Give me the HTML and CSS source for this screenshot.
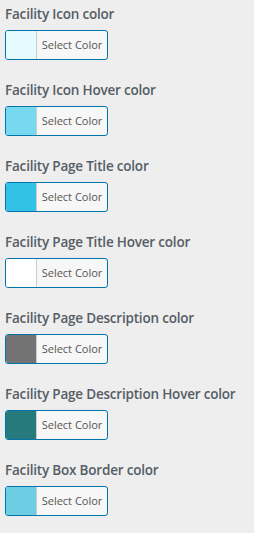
FILE: index.html
```html
<!DOCTYPE html>
<html lang="en">
<head>
    <meta charset="UTF-8">
    <meta name="viewport" content="width=device-width, initial-scale=1.0">
    <title>Facility Colors</title>
    <link rel="stylesheet" href="styles.css">
</head>
<body>
    <div class="control">
        <span class="control-title">Facility Icon color</span>
        <button class="color-result"><span class="swatch swatch-icon"></span><span class="color-text">Select Color</span></button>
    </div>
    <div class="control">
        <span class="control-title">Facility Icon Hover color</span>
        <button class="color-result"><span class="swatch swatch-icon-hover"></span><span class="color-text">Select Color</span></button>
    </div>
    <div class="control">
        <span class="control-title">Facility Page Title color</span>
        <button class="color-result"><span class="swatch swatch-title"></span><span class="color-text">Select Color</span></button>
    </div>
    <div class="control">
        <span class="control-title">Facility Page Title Hover color</span>
        <button class="color-result"><span class="swatch swatch-title-hover"></span><span class="color-text">Select Color</span></button>
    </div>
    <div class="control">
        <span class="control-title">Facility Page Description color</span>
        <button class="color-result"><span class="swatch swatch-desc"></span><span class="color-text">Select Color</span></button>
    </div>
    <div class="control">
        <span class="control-title">Facility Page Description Hover color</span>
        <button class="color-result"><span class="swatch swatch-desc-hover"></span><span class="color-text">Select Color</span></button>
    </div>
    <div class="control">
        <span class="control-title">Facility Box Border color</span>
        <button class="color-result"><span class="swatch swatch-border"></span><span class="color-text">Select Color</span></button>
    </div>
</body>
</html>
```

FILE: styles.css
```css
body {
    margin: 0;
    padding: 0 5px;
    background-color: #eeeeee;
    font-family: 'Open Sans', 'Noto Sans', sans-serif;
}
.control {
    padding-top: 4px;
    margin-bottom: 16px;
}
.control-title {
    display: block;
    font-size: 13.5px;
    font-weight: 600;
    letter-spacing: -0.2px;
    line-height: 20px;
    color: #555d66;
    white-space: nowrap;
    margin-bottom: 6px;
}
.color-result {
    display: flex;
    width: 103px;
    height: 30px;
    padding: 0;
    margin: 0;
    border: 1px solid #0073aa;
    border-radius: 3px;
    background-color: #f7f7f7;
    overflow: hidden;
    box-sizing: border-box;
    cursor: pointer;
    font-family: inherit;
}
.swatch {
    width: 30px;
    height: 100%;
    border-right: 1px solid #cccccc;
}
.color-text {
    flex: 1;
    font-size: 11px;
    line-height: 28px;
    color: #555555;
    text-align: center;
}
.swatch-icon { background-color: #e6fbff; }
.swatch-icon-hover { background-color: #76d9ef; }
.swatch-title { background-color: #33c1e6; }
.swatch-title-hover { background-color: #ffffff; }
.swatch-desc { background-color: #737373; }
.swatch-desc-hover { background-color: #277a7b; }
.swatch-border { background-color: #6ccde3; }
```
